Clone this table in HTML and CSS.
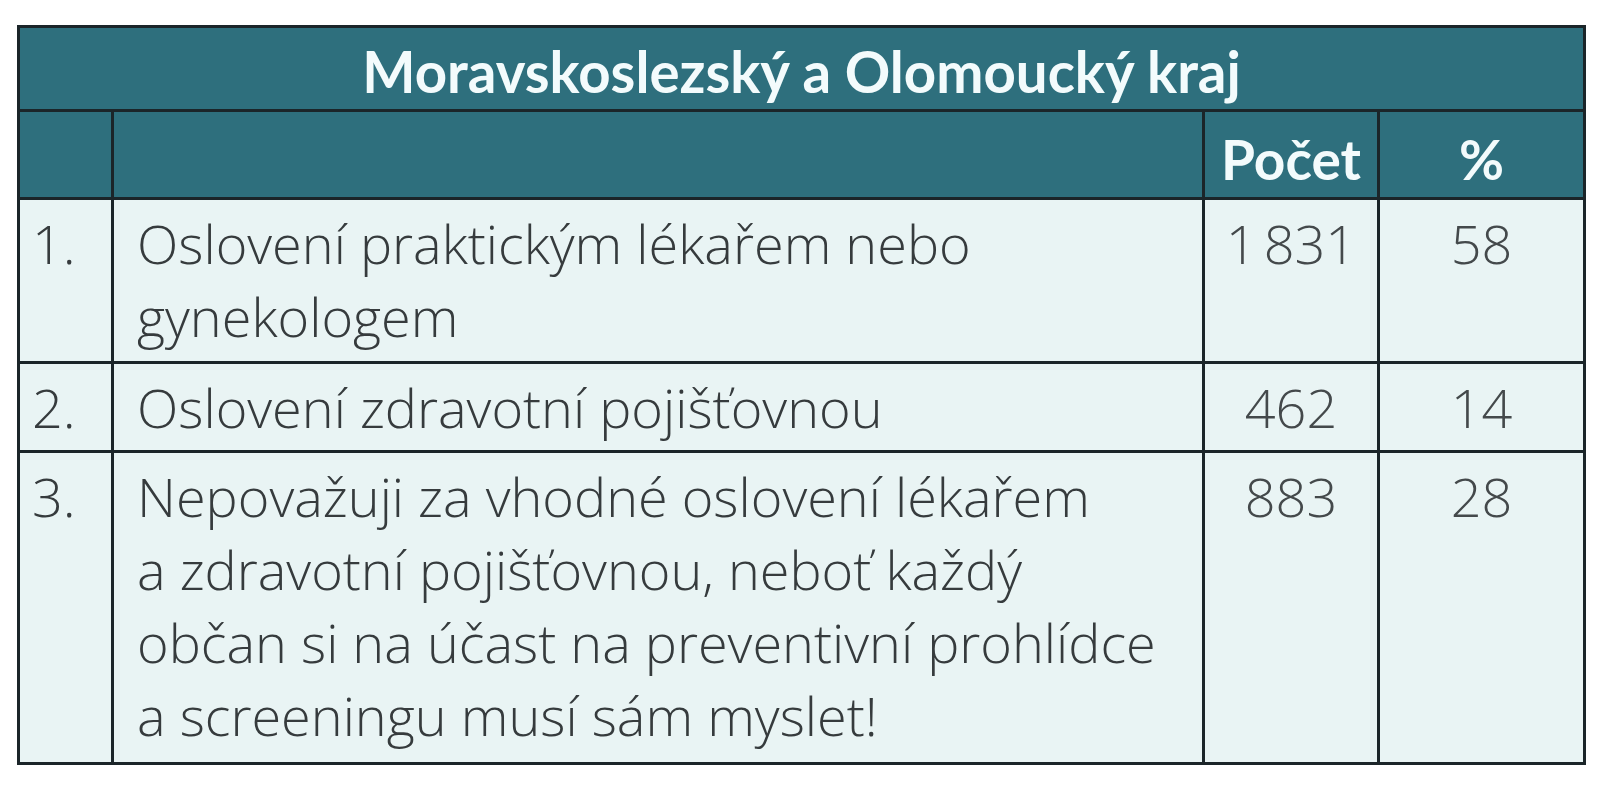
FILE: index.html
```html
<!DOCTYPE html>
<html lang="cs">
<head>
<meta charset="utf-8">
<title>Moravskoslezský a Olomoucký kraj</title>
<link rel="stylesheet" href="styles.css">
</head>
<body>
<table class="data">
  <colgroup>
    <col class="c-num">
    <col class="c-text">
    <col class="c-count">
    <col class="c-pct">
  </colgroup>
  <thead>
    <tr class="h-title"><th colspan="4">Moravskoslezský a Olomoucký kraj</th></tr>
    <tr class="h-cols"><th></th><th></th><th>Počet</th><th>%</th></tr>
  </thead>
  <tbody>
    <tr class="r1">
      <td class="num">1.</td>
      <td class="txt">Oslovení praktickým lékařem nebo<br>gynekologem</td>
      <td class="val">1&#8239;831</td>
      <td class="val">58</td>
    </tr>
    <tr class="r2">
      <td class="num">2.</td>
      <td class="txt">Oslovení zdravotní pojišťovnou</td>
      <td class="val">462</td>
      <td class="val">14</td>
    </tr>
    <tr class="r3">
      <td class="num">3.</td>
      <td class="txt">Nepovažuji za vhodné oslovení lékařem<br>a zdravotní pojišťovnou, neboť každý<br>občan si na účast na preventivní prohlídce<br>a screeningu musí sám myslet!</td>
      <td class="val">883</td>
      <td class="val">28</td>
    </tr>
  </tbody>
</table>
</body>
</html>
```

FILE: styles.css
```css
html, body {
  margin: 0;
  padding: 0;
  background: #ffffff;
}

body {
  padding: 25px 0 0 17px;
}

.data {
  border-collapse: collapse;
  table-layout: fixed;
  width: 1566px;
  font-family: "Open Sans", "Liberation Sans", sans-serif;
}

.c-num { width: 94px; }
.c-text { width: 1091px; }
.c-count { width: 175px; }
.c-pct { width: 206px; }

.data th,
.data td {
  border: 3px solid #1b2529;
  padding: 0;
}

.data thead th {
  background: #2e6f7d;
  color: #f3fbfc;
  font-family: Lato, "Open Sans", sans-serif;
  font-weight: 700;
  font-size: 55px;
  line-height: 60px;
  text-align: center;
  vertical-align: middle;
}

.h-title { height: 84px; }
.data .h-title th { padding-top: 4px; font-size: 56.4px; }
.h-cols { height: 88px; }
.data .h-cols th { padding-top: 8px; }

.data tbody td {
  background: #e9f4f4;
  color: #363b3d;
  font-weight: 300;
  font-size: 54px;
  line-height: 73px;
  vertical-align: top;
  padding-top: 7px;
}

.data td.num { padding-left: 12px; }
.data td.txt { padding-left: 23px; }
.data td.val { text-align: center; color: #44494b; }

.r1 { height: 164px; }
.r2 { height: 89px; }
.r3 { height: 312px; }
```
